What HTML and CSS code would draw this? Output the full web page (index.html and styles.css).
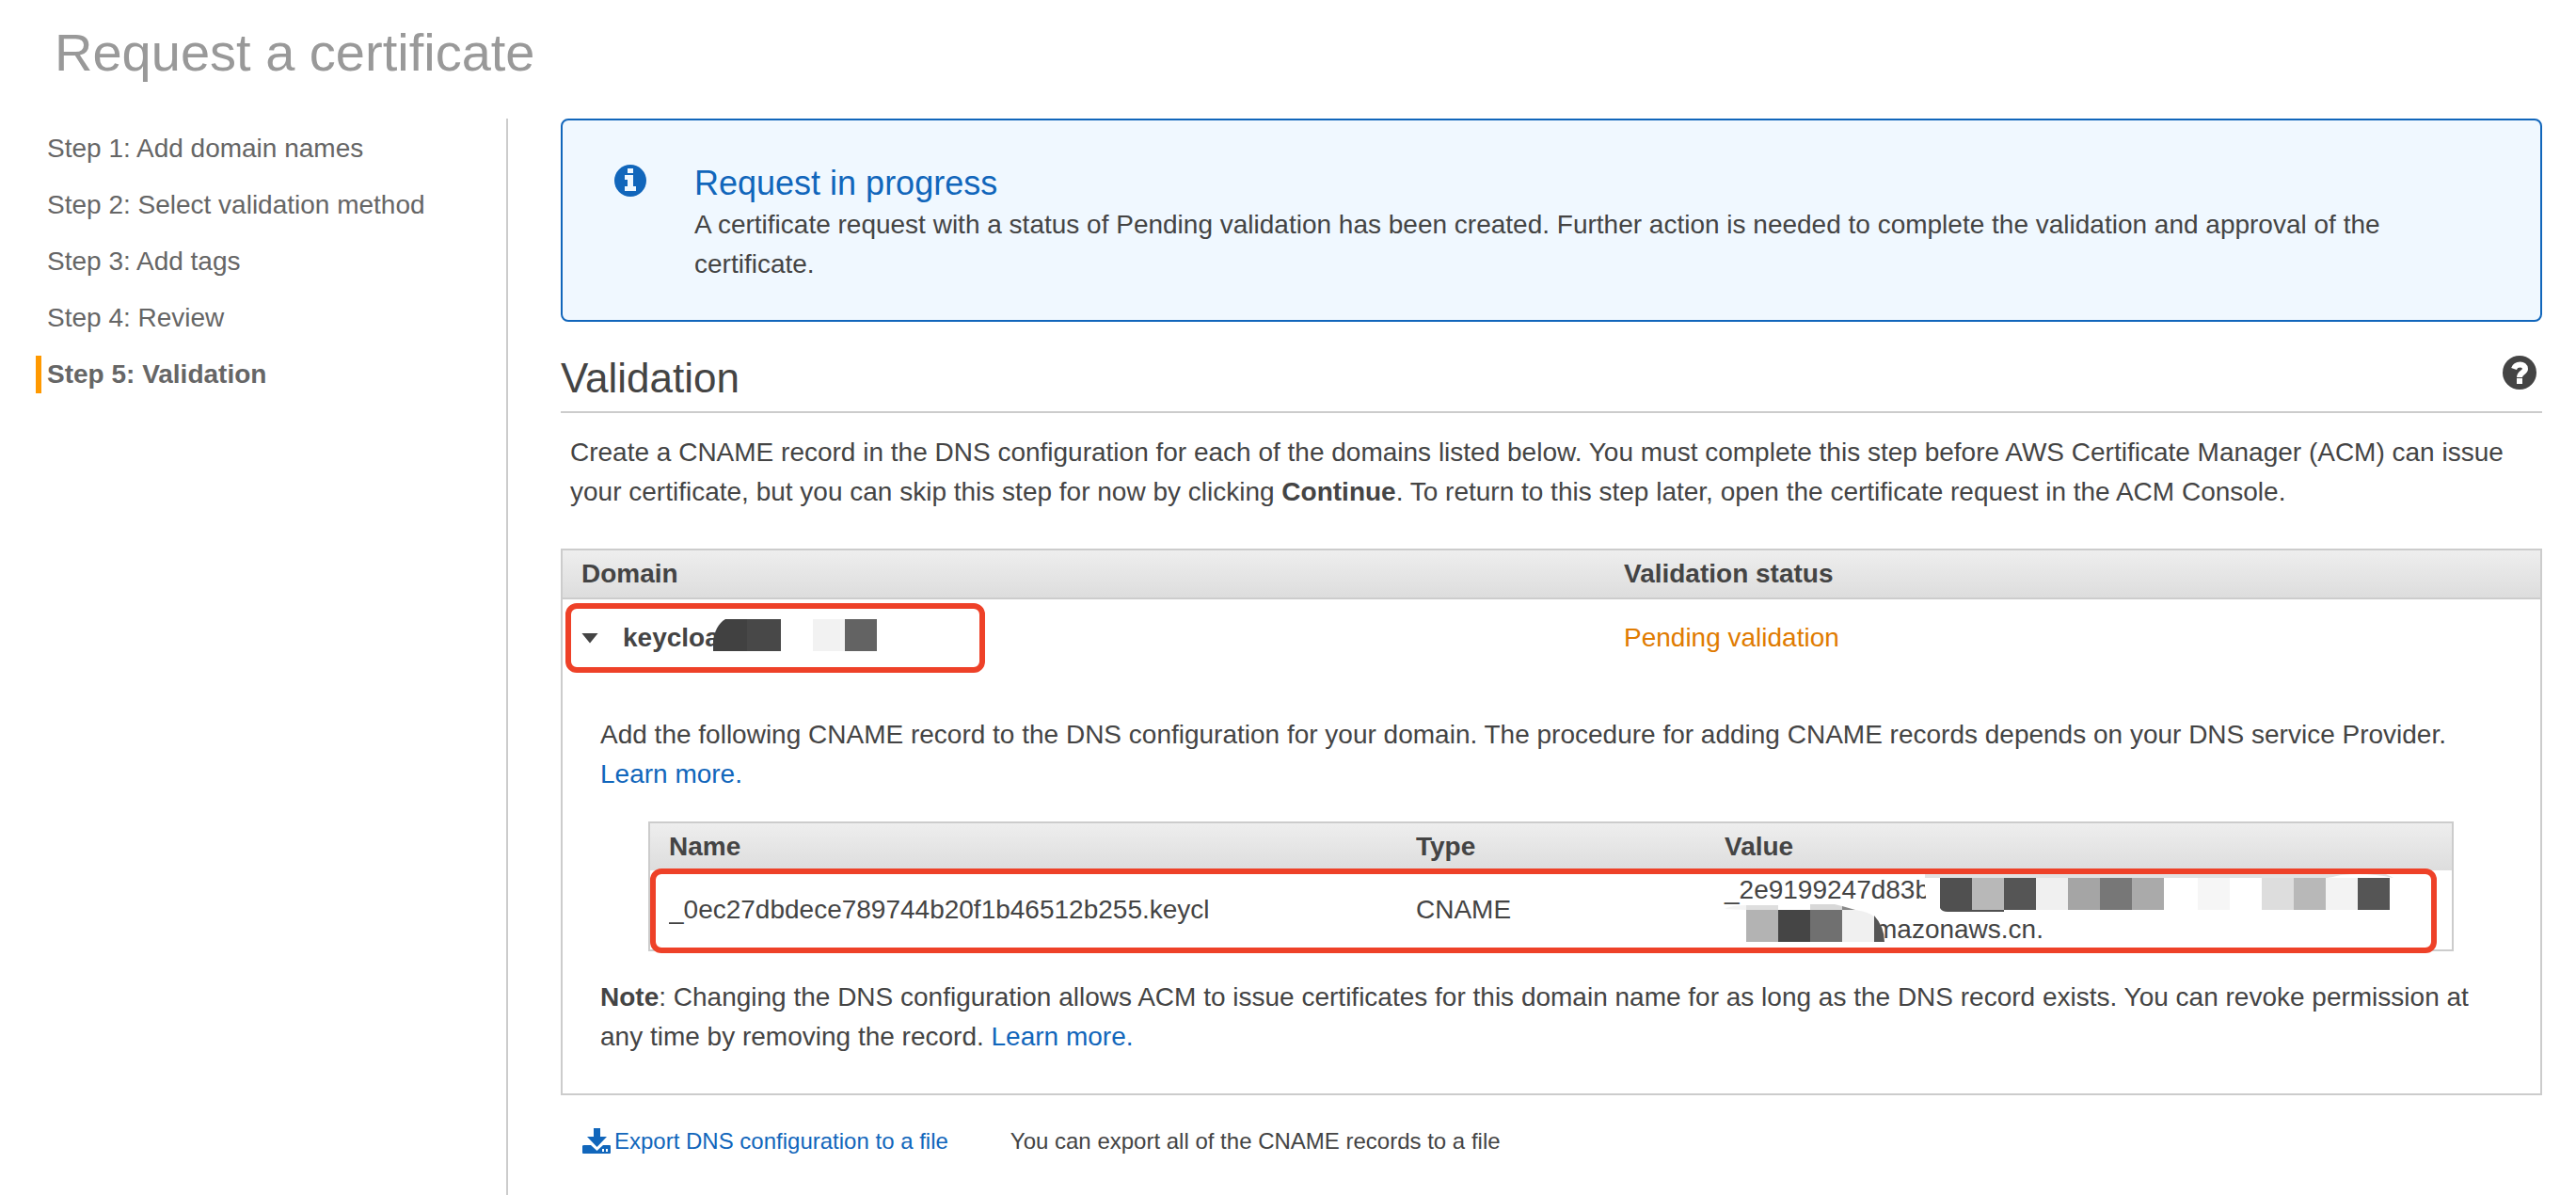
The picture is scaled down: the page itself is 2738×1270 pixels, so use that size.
FILE: index.html
```html
<!DOCTYPE html>
<html lang="en">
<head>
<meta charset="utf-8">
<title>Request a certificate</title>
<link rel="stylesheet" href="styles.css">
</head>
<body>
<h1 class="page-title">Request a certificate</h1>
<div class="layout">
  <nav class="steps" aria-label="Wizard steps">
    <ol class="step-list">
      <li class="step">Step 1: Add domain names</li>
      <li class="step">Step 2: Select validation method</li>
      <li class="step">Step 3: Add tags</li>
      <li class="step">Step 4: Review</li>
      <li class="step step-current" aria-current="step">Step 5: Validation</li>
    </ol>
  </nav>
  <main class="content">
    <section class="alert">
      <svg class="alert-icon" viewBox="0 0 34 34" aria-hidden="true">
        <circle cx="17" cy="17" r="17" fill="#1166bb"/>
        <path fill="#f0f8ff" d="M14 4h6v5h-6zM11 11h9v12h3v5H11v-5h3v-7h-3z"/>
      </svg>
      <div class="alert-body">
        <h2 class="alert-title">Request in progress</h2>
        <p class="text">A certificate request with a status of Pending validation has been created. Further action is needed to complete the validation and approval of the certificate.</p>
      </div>
    </section>
    <header class="section-head">
      <h2 class="section-title">Validation</h2>
      <button class="help" type="button" aria-label="Help">
        <svg class="help-icon" viewBox="0 0 36 36" aria-hidden="true">
          <circle cx="18" cy="18" r="18" fill="#444"/>
          <path fill="none" stroke="#fff" stroke-width="6" d="M12 14c2-6 12-6 12 0 0 4-6 4-6 9"/>
          <path fill="#fff" d="M15 24h6v6h-6z"/>
        </svg>
      </button>
    </header>
    <p class="text intro">Create a CNAME record in the DNS configuration for each of the domains listed below. You must complete this step before AWS Certificate Manager (ACM) can issue your certificate, but you can skip this step for now by clicking <b>Continue</b>. To return to this step later, open the certificate request in the ACM Console.</p>
    <table class="domains">
      <colgroup><col class="col-domain"><col></colgroup>
      <thead><tr><th>Domain</th><th>Validation status</th></tr></thead>
      <tbody>
        <tr class="domain-row">
          <td>
            <div class="domain-cell">
              <button class="toggle" type="button" aria-label="Collapse"></button>
              <b>keycloak</b>
              <svg class="mask mask-domain" viewBox="0 0 200 34" aria-hidden="true">
                <path fill="#fff" d="M14 0h186v34H0z"/>
                <path fill="#414141" d="M0 34V22Q3 6 13 0h23v34z"/>
                <path fill="#484848" d="M36 0h36v34H36z"/>
                <path fill="#f2f2f2" d="M106 0h34v34h-34z"/>
                <path fill="#636363" d="M140 0h34v34h-34z"/>
              </svg>
              <span class="marker marker-domain"></span>
            </div>
          </td>
          <td class="pending">Pending validation</td>
        </tr>
        <tr>
          <td class="details" colspan="2">
            <p class="text">Add the following CNAME record to the DNS configuration for your domain. The procedure for adding CNAME records depends on your DNS service Provider. <a href="#">Learn more.</a></p>
            <div class="record-wrap">
              <table class="records">
                <colgroup><col class="col-name"><col class="col-type"><col></colgroup>
                <thead><tr><th>Name</th><th>Type</th><th>Value</th></tr></thead>
                <tbody><tr>
                  <td><span class="record-name">_0ec27dbdece789744b20f1b46512b255.keycl</span></td>
                  <td>CNAME</td>
                  <td><div class="value">
                    <span class="value-start">_2e9199247d83b</span>
                    <span class="value-end">mazonaws.cn.</span>
                    <svg class="mask mask-value" viewBox="0 0 720 84" aria-hidden="true">
                      <path fill="#fff" d="M213 0h507v42H225Q214 34 213 24z"/>
                      <path fill="#e2e2e2" d="M213 4h490l8 4q-26-6-56-3q-30 8-64 3H213z"/>
                      <path fill="#505050" d="M229 8h34v34h34v2h-60q-6 0-8-4z"/>
                      <path fill="#b8b8b8" d="M263 8h34v34h-34z"/>
                      <path fill="#555" d="M297 8h34v34h-34z"/>
                      <path fill="#f0f0f0" d="M331 8h34v34h-34z"/>
                      <path fill="#a5a5a5" d="M365 8h34v34h-34z"/>
                      <path fill="#777" d="M399 8h34v34h-34z"/>
                      <path fill="#aaa" d="M433 8h34v34h-34z"/>
                      <path fill="#f6f6f6" d="M503 8h34v34h-34z"/>
                      <path fill="#ddd" d="M571 8h34v34h-34z"/>
                      <path fill="#b8b8b8" d="M605 8h34v34h-34z"/>
                      <path fill="#f3f3f3" d="M639 8h34v34h-34z"/>
                      <path fill="#555" d="M673 8h34v34h-34z"/>
                      <path fill="#b3b3b3" d="M23 42h34v34H23z"/>
                      <path fill="#454545" d="M57 42h34v34H57z"/>
                      <path fill="#707070" d="M91 42h34v34H91z"/>
                      <path fill="#f0f0f0" d="M125 42h14q14 2 20 7v27h-34z"/>
                      <path fill="#555" d="M159 48q11 12 11 28h-11z"/>
                      <path fill="#f4f4f4" d="M0 41q8-4 23-4v5z"/>
                      <path fill="#dedede" d="M23 37h34v5H23z"/>
                      <path fill="#d8d8d8" d="M91 36h26l8 2v4H91z"/>
                      <path fill="#888" d="M125 38l14 4h-14z"/>
                    </svg>
                  </div></td>
                </tr></tbody>
              </table>
              <span class="marker marker-record"></span>
            </div>
            <p class="text"><b>Note</b>: Changing the DNS configuration allows ACM to issue certificates for this domain name for as long as the DNS record exists. You can revoke permission at any time by removing the record. <a href="#">Learn more.</a></p>
          </td>
        </tr>
      </tbody>
    </table>
    <div class="export">
      <a class="export-link" href="#">
        <svg class="export-icon" viewBox="0 0 30 28" aria-hidden="true">
          <path fill="#1166bb" d="M12 0h7v9h7L15.500 20 5 9h7zM2 18h7l6.500 6 6.500-6h7q1 0 1 1v7q0 1-1 1H1q-1 0-1-1v-7q0-1 2-1z"/>
          <path fill="#fff" d="M21 22h2v3h-2zM25 22h2v3h-2z"/>
        </svg>Export DNS configuration to a file</a>
      <span>You can export all of the CNAME records to a file</span>
    </div>
  </main>
</div>
</body>
</html>
```
FILE: styles.css
```css
* { box-sizing: border-box; }
body {
  margin: 0;
  min-height: 100vh;
  display: flex;
  flex-direction: column;
  background: #fff;
  color: #444;
  font: 28px/42px "Liberation Sans", Arial, sans-serif;
}
h1, h2, p, ol { margin: 0; padding: 0; font-weight: 400; }
a { color: #1166bb; text-decoration: none; }
button { border: 0; padding: 0; background: none; cursor: pointer; }
.page-title {
  padding: 24px 58px 38px;
  font-size: 56px;
  line-height: 64px;
  color: #999;
}
.layout { flex: 1; display: flex; }
.steps {
  flex: none;
  width: 540px;
  padding: 12px 0 0 38px;
  border-right: 2px solid #ccc;
  color: #666;
}
.step-list { list-style: none; display: grid; gap: 20px; }
.step { padding-left: 6px; border-left: 6px solid transparent; line-height: 40px; }
.step-current { border-color: #f90; font-weight: 700; }
.content { flex: 1; min-width: 0; padding: 0 36px 0 56px; }
.alert {
  display: flex;
  gap: 51px;
  padding: 44px 96px 38px 55px;
  border: 2px solid #1166bb;
  border-radius: 8px;
  background: #f0f8ff;
}
.alert-icon { flex: none; width: 34px; height: 34px; margin-top: 3px; }
.alert-title { font-size: 36px; line-height: 46px; color: #1166bb; }
.section-head {
  display: flex;
  justify-content: space-between;
  align-items: center;
  margin-top: 25px;
  padding-right: 6px;
  border-bottom: 2px solid #ccc;
}
.section-title { font-size: 44px; line-height: 70px; }
.help { display: flex; margin-bottom: 12px; }
.help-icon { width: 36px; height: 36px; }
.intro { padding: 21px 20px 39px 10px; }
table { width: 100%; border-collapse: separate; border-spacing: 0; table-layout: fixed; border: 2px solid #ccc; }
th, td { padding: 0 20px; text-align: left; }
th { height: 50px; font-weight: 700; background: linear-gradient(#eee, #ddd); }
.domains > thead th { height: 52px; border-bottom: 2px solid #ccc; }
.col-domain { width: 1108px; }
.domain-row td { height: 82px; }
.domain-cell { position: relative; display: flex; align-items: center; gap: 26px; }
.toggle {
  width: 18px;
  height: 11px;
  background: #444;
  clip-path: polygon(0 0, 100% 0, 50% 100%);
}
.pending { color: #e07b00; }
.mask { position: absolute; }
.mask-domain { left: 140px; top: 1px; width: 200px; height: 34px; }
.marker { position: absolute; border: 6px solid #ee4128; border-radius: 12px; }
.marker-domain { left: -17px; top: -16px; width: 446px; height: 74px; }
.domains .details { padding: 41px 40px 39px; }
.record-wrap { position: relative; margin: 29px 52px 28px 51px; }
.col-name { width: 794px; }
.col-type { width: 328px; }
.records td { height: 84px; }
.record-name { display: block; width: 578px; overflow: hidden; white-space: nowrap; }
.value { position: relative; display: flex; flex-direction: column; }
.value-end { padding-left: 160px; }
.mask-value { left: 0; top: 0; width: 720px; height: 84px; }
.marker-record { left: 2px; right: 18px; top: 50px; bottom: -2px; }
.export { display: flex; gap: 66px; padding: 28px 23px; font-size: 24px; }
.export-link { display: flex; align-items: center; gap: 4px; }
.export-icon { width: 30px; height: 28px; }
```
